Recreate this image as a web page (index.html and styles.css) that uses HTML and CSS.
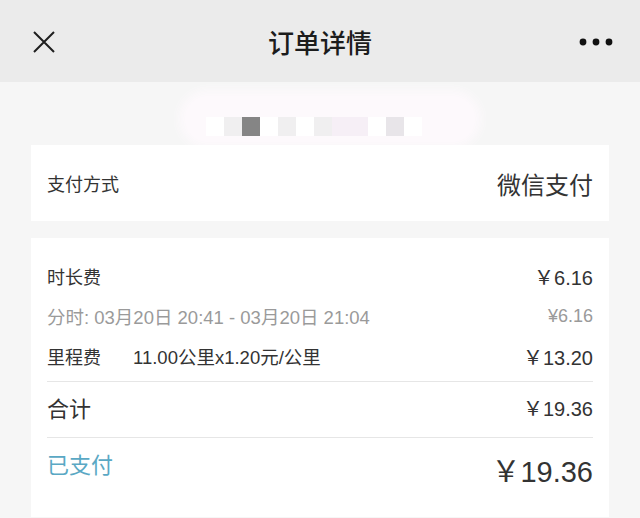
FILE: index.html
```html
<!DOCTYPE html>
<html lang="zh-CN">
<head>
    <meta charset="UTF-8">
    <meta name="viewport" content="width=device-width, initial-scale=1.0">
    <title>订单详情</title>
    <link rel="stylesheet" href="styles.css">
</head>
<body>

    <!-- Top bar -->
    <div class="topbar">
        <svg class="close-icon" width="24" height="24" viewBox="0 0 24 24">
            <path d="M2 2 L22 22 M22 2 L2 22" stroke="#1f1f1f" stroke-width="2" fill="none"/>
        </svg>
        <div class="topbar-title">订单详情</div>
        <svg class="more-icon" width="34" height="10" viewBox="0 0 34 10">
            <circle cx="4" cy="5" r="3.4" fill="#111"/>
            <circle cx="17" cy="5" r="3.4" fill="#111"/>
            <circle cx="30" cy="5" r="3.4" fill="#111"/>
        </svg>
    </div>

    <div class="content">
        <!-- Mosaic over the hidden plate number -->
        <div class="mosaic-row">
            <div class="mosaic">
                <span class="px px-white"></span>
                <span class="px px-light"></span>
                <span class="px px-dark"></span>
                <span class="px px-white"></span>
                <span class="px px-light"></span>
                <span class="px px-white"></span>
                <span class="px px-light"></span>
                <span class="px px-pink"></span>
                <span class="px px-pink"></span>
                <span class="px px-white"></span>
                <span class="px px-grey"></span>
                <span class="px px-white"></span>
            </div>
        </div>

        <!-- Payment method -->
        <div class="card pay-card">
            <span class="label">支付方式</span>
            <span class="pay-method">微信支付</span>
        </div>

        <!-- Fee details -->
        <div class="card fee-card">
            <div class="row">
                <span class="label">时长费</span>
                <span class="amount">￥6.16</span>
            </div>
            <div class="row row-sub">
                <span>分时: 03月20日 20:41 - 03月20日 21:04</span>
                <span class="amount-sub">¥6.16</span>
            </div>
            <div class="row">
                <span class="label">里程费<span class="detail">11.00公里x1.20元/公里</span></span>
                <span class="amount">￥13.20</span>
            </div>
            <div class="row row-total">
                <span class="label-big">合计</span>
                <span class="amount">￥19.36</span>
            </div>
            <div class="row row-paid">
                <span class="label-big paid">已支付</span>
                <span class="amount-big">￥19.36</span>
            </div>
        </div>
    </div>

</body>
</html>
```

FILE: styles.css
```css
body {
    margin: 0;
    background-color: #f6f6f6;
    font-family: "Noto Sans CJK SC", "Liberation Sans", sans-serif;
    color: #333;
}
.topbar {
    height: 82px;
    background-color: #ebebeb;
    display: flex;
    align-items: center;
    justify-content: space-between;
    padding: 0 27px 0 32px;
    position: relative;
}
.close-icon {
    margin-top: 2px;
}
.more-icon {
    margin-top: 2px;
}
.topbar-title {
    position: absolute;
    left: 0;
    right: 0;
    text-align: center;
    font-size: 26px;
    font-weight: 500;
    color: #1c1c1c;
    pointer-events: none;
}
.content {
    padding: 0 31px;
}
.mosaic-row {
    height: 63px;
    display: flex;
    justify-content: center;
    position: relative;
}
.mosaic {
    margin-top: 14px;
    width: 290px;
    height: 46px;
    margin-left: 20px;
    background-color: #fdf9fc;
    border-radius: 24px;
    box-shadow: 0 0 10px 6px #fdf9fc;
    display: flex;
    align-items: center;
    padding-left: 21px;
    box-sizing: border-box;
}
.px {
    width: 18px;
    height: 19px;
    margin-top: 14px;
    flex-shrink: 0;
}
.px-white {
    background-color: #ffffff;
}
.px-light {
    background-color: #f0eff0;
}
.px-dark {
    background-color: #858585;
}
.px-pink {
    background-color: #f6eff6;
}
.px-grey {
    background-color: #e8e5e9;
}
.card {
    background-color: #fff;
    position: relative;
}
.pay-card {
    height: 76px;
    display: flex;
    align-items: center;
    justify-content: space-between;
    padding: 0 16px;
}
.label {
    font-size: 18px;
    color: #333;
}
.pay-method {
    font-size: 24px;
    color: #333;
}
.fee-card {
    margin-top: 17px;
    padding: 18px 16px 15px;
}
.row {
    display: flex;
    align-items: center;
    justify-content: space-between;
    height: 40px;
}
.row-sub {
    font-size: 18.5px;
    color: #9a9a9a;
    font-family: "Liberation Sans", "Noto Sans CJK SC", sans-serif;
}
.detail {
    margin-left: 32px;
    font-size: 18.5px;
    font-family: "Liberation Sans", "Noto Sans CJK SC", sans-serif;
}
.amount {
    font-family: "Liberation Sans", "Noto Sans CJK SC", sans-serif;
    font-size: 20px;
    color: #333;
}
.amount-sub {
    font-family: "Liberation Sans", sans-serif;
    font-size: 18px;
    color: #9a9a9a;
}
.row-total {
    margin-top: 5px;
    height: 50px;
    padding-bottom: 5px;
    border-top: 1px solid #e6e6e6;
}
.label-big {
    font-size: 22px;
    color: #333;
}
.row-paid {
    height: 55px;
    border-top: 1px solid #e6e6e6;
    align-items: flex-start;
    padding-top: 9px;
}
.paid {
    color: #5aa8c4;
}
.amount-big {
    font-family: "Liberation Sans", "Noto Sans CJK SC", sans-serif;
    font-size: 29px;
    color: #333;
    margin-top: 1px;
}
```
